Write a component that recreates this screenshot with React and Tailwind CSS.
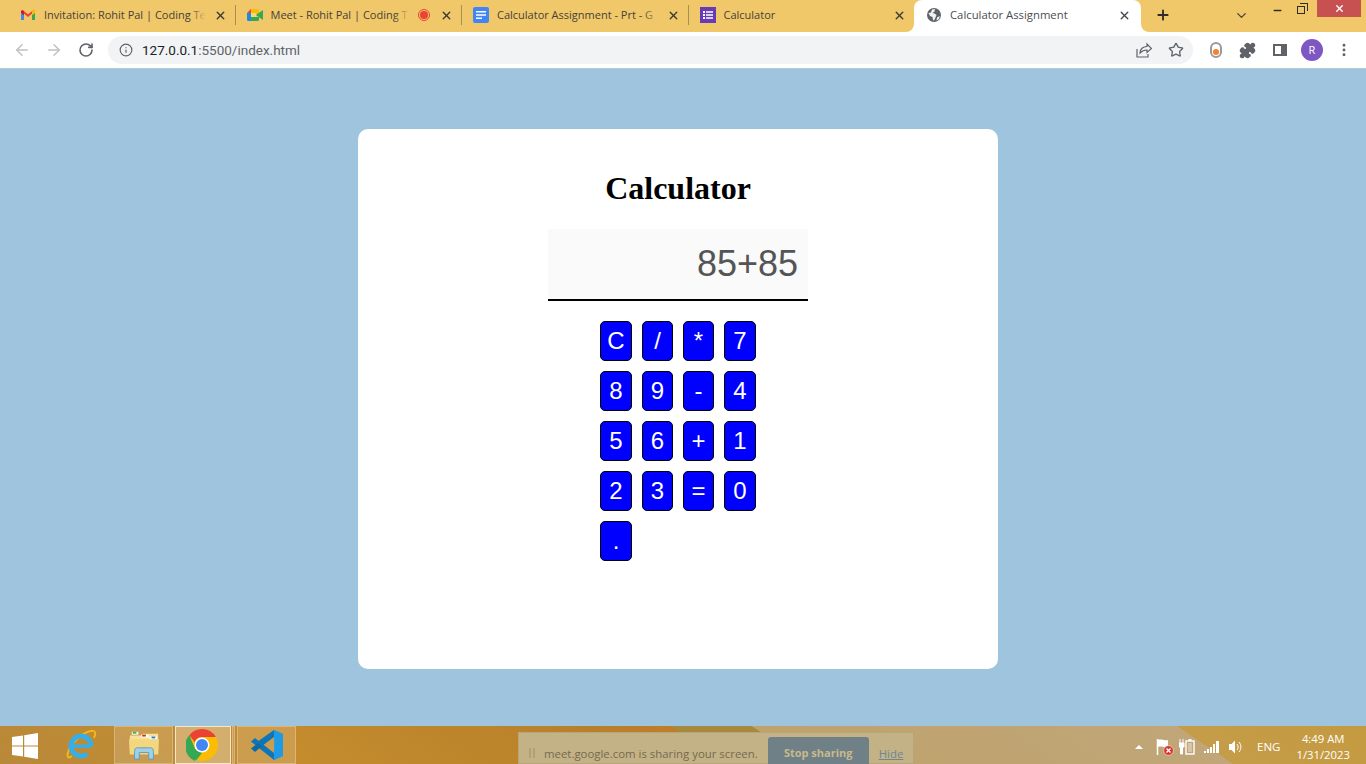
import { ArrowLeft, ArrowRight, RotateCw, Info, Star, Puzzle, MoreVertical, Plus, ChevronDown, X, Minus } from 'lucide-react'

const keys = ['C', '/', '*', '7', '8', '9', '-', '4', '5', '6', '+', '1', '2', '3', '=', '0', '.']

const GmailIcon = () => (
    <svg width="16" height="16" viewBox="0 0 16 16">
        <path d="M1 4v9h3V6z" fill="#4285f4" />
        <path d="M15 4v9h-3V6z" fill="#34a853" />
        <path d="M1 4.200 2.400 3 8 7.200 13.600 3 15 4.200 8 10z" fill="#ea4335" />
        <path d="M12 4.200 13.600 3 15 4.200V6l-3 2.200z" fill="#fbbc04" />
        <path d="M1 4.200 2.400 3 4 4.200v4L1 6z" fill="#c5221f" />
    </svg>
)

const MeetIcon = () => (
    <svg width="16" height="16" viewBox="0 0 16 16">
        <path d="M4 2h6.500A1.500 1.500 0 0 1 12 3.500V7H0z" fill="#fbbc04" />
        <path d="M0 6h4v8H1.500A1.500 1.500 0 0 1 0 12.500z" fill="#1e88e5" />
        <path d="M0 6l4-4v4z" fill="#ea4335" />
        <path d="M4 10h8v2.500a1.500 1.500 0 0 1-1.500 1.500H4z" fill="#34a853" />
        <path d="M9 8l7-5v10z" fill="#34a853" />
        <rect x="4" y="6" width="5" height="4" fill="#f6d978" />
    </svg>
)

const DocsIcon = () => (
    <svg width="16" height="16" viewBox="0 0 16 16">
        <rect width="16" height="16" rx="2" fill="#4285f4" />
        <path d="M3 4h10v1.600H3zM3 7.200h10v1.600H3zM3 10.400h6V12H3z" fill="#fff" />
    </svg>
)

const FormsIcon = () => (
    <svg width="16" height="16" viewBox="0 0 16 16">
        <rect width="16" height="16" fill="#673ab7" />
        <path d="M3 4h2v2H3zM6 4.200h7v1.600H6zM3 7h2v2H3zM6 7.200h7v1.600H6zM3 10h2v2H3zM6 10.200h7v1.600H6z" fill="#fff" />
    </svg>
)

const GlobeIcon = () => (
    <svg width="14" height="14" viewBox="0 0 14 14">
        <circle cx="7" cy="7" r="7" fill="#5f6368" />
        <path d="M1.500 5 4 4.500l1-3 3-.5-.5 2.500-2 1.500 2 .5 2 1.500-1 2.500-1.500 3-1-.5-.5-3L3 8z" fill="#f1f3f4" />
        <path d="M10 9.500 12.800 8l-.8 3-2.500 1.500z" fill="#f1f3f4" />
    </svg>
)

const ShareIcon = () => (
    <svg width="16" height="16" viewBox="0 0 16 16" fill="none" stroke="#5f6368" strokeWidth="1.200">
        <path d="M1 7v8h11v-3" />
        <path d="M4 11c0-4 3-6.500 7-6.500V2l4.500 4.500L11 10.500V8c-3 0-5 .8-7 3z" />
    </svg>
)

const Tab = ({ icon, title, record, last }) => (
    <div className="relative flex h-8 w-[226.500px] shrink-0 items-center pb-[2px] pl-[11px] pr-2">
        <span className="flex w-4 shrink-0">{icon}</span>
        <span className="relative ml-2 flex-1 overflow-hidden whitespace-nowrap text-[11px] text-[#45423a]">
            {title}
            <span className="absolute inset-y-0 right-0 w-4 bg-gradient-to-r from-transparent to-[#f0c869]" />
        </span>
        {record && (
            <span className="ml-2 mr-[2px] flex size-3 shrink-0 items-center justify-center rounded-full border border-[#ea4335]">
                <span className="size-2 rounded-full bg-[#ea4335]" />
            </span>
        )}
        <X size={13} strokeWidth={2.600} className="ml-2 mr-[1px] shrink-0 text-[#3c3a34]" />
        {!last && <span className="absolute right-0 top-[5px] h-5 w-px bg-[#a98f4f]" />}
    </div>
)

const WinLogo = () => (
    <svg width="26" height="26" viewBox="0 0 26 26">
        <path d="M0 4 11 2.400v10H0zM12.200 2.200 26 0v12.400H12.200zM0 13.600h11v10L0 22zM12.200 13.600H26V26l-13.800-2.200z" fill="#fff" />
    </svg>
)

const IeLogo = () => (
    <svg width="32" height="32" viewBox="0 0 32 32">
        <path d="M7 27C2 31 1 26 5 19 9 11 19 3 26 2c5-1 5 3 3 7" fill="none" stroke="#f3b61f" strokeWidth="2" />
        <circle cx="16" cy="17" r="10" fill="none" stroke="#38aee6" strokeWidth="5" strokeDasharray="54 9" strokeDashoffset="-9" />
        <path d="M7 15.500h19V19H7z" fill="#38aee6" />
    </svg>
)

const FolderLogo = () => (
    <svg width="32" height="32" viewBox="0 0 34 32">
        <path d="M2 6h12l2-2h16v21H2z" fill="#f6e09a" />
        <path d="M4 2h7v3H4z" fill="#fff" />
        <path d="M5 2h4v2H5z" fill="#3fb24b" />
        <path d="M14 5h8v3h-8z" fill="#fff" />
        <path d="M15 5h4v2h-4z" fill="#c8372d" />
        <path d="M23 7h8v3h-8z" fill="#fff" />
        <path d="M25 7h4v2h-4z" fill="#2c7fd3" />
        <path d="M1 10h32l-1 16H2z" fill="#f3d77f" />
        <path d="M7 31v-8c0-3 1-4 3-4h14c2 0 3 1 3 4v8h-5v-7H12v7z" fill="#9fd0e8" stroke="#5d9dbd" />
    </svg>
)

const ChromeLogo = () => (
    <svg width="32" height="32" viewBox="0 0 32 32">
        <circle cx="16" cy="16" r="16" fill="#fbbc04" />
        <path d="M16 0a16 16 0 0 1 13.860 8H16a8 8 0 0 0-7.400 5L3.300 6.200A16 16 0 0 1 16 0z" fill="#ea4335" />
        <path d="M3.300 6.200 9.200 20a8 8 0 0 0 3.300 3.300L9 31.900A16 16 0 0 1 3.300 6.200z" fill="#34a853" />
        <path d="M9.500 20.500 16 24l-5.500 7.100-3-2z" fill="#34a853" />
        <circle cx="16" cy="16" r="7.500" fill="#fff" />
        <circle cx="16" cy="16" r="6" fill="#4285f4" />
    </svg>
)

const VsCodeLogo = () => (
    <svg width="34" height="32" viewBox="0 0 34 32">
        <path d="M24 1 33 5v22l-9 4z" fill="#23a3ea" />
        <path d="M24 1v7L12 17 7 13z" fill="#0d76b8" />
        <path d="M24 31v-7L5 9 1 12.500z" fill="#0d76b8" />
        <path d="M24 1 33 5v22l-9 4 1-15z" fill="#1f9be3" />
        <path d="M1 19.500 5 23l7-6-4-3z" fill="#0a69a6" />
    </svg>
)

const FlagIcon = () => (
    <svg width="18" height="18" viewBox="0 0 18 18">
        <path d="M1.500 1v16" stroke="#fff" strokeWidth="1.500" />
        <path d="M2 2c3-1.500 5 1 10 0v7c-5 1-7-1.500-10 0z" fill="#fff" />
        <circle cx="12.500" cy="12.500" r="4.800" fill="#d9342b" stroke="#fff" strokeWidth=".5" />
        <path d="m10.500 10.500 4 4m0-4-4 4" stroke="#fff" strokeWidth="1.400" />
    </svg>
)

const BatteryIcon = () => (
    <svg width="16" height="18" viewBox="0 0 16 18">
        <path d="M1 1v4M4 1v4M0 5h5v4H3.500v7h-2V9H0z" stroke="#fff" strokeWidth="1" fill="#fff" />
        <rect x="7" y="3" width="8" height="13" fill="none" stroke="#fff" strokeWidth="1.400" />
        <rect x="9.500" y="1" width="3" height="2" fill="#fff" />
        <rect x="9" y="5" width="4" height="9" fill="#fff" opacity=".35" />
    </svg>
)

const SignalIcon = () => (
    <svg width="16" height="14" viewBox="0 0 16 14">
        <path d="M0 11h2v2H0zM3 9h2v4H3zM6 7h2v6H6zM9 4h2v9H9zM12 1h3v12h-3z" fill="#fff" />
    </svg>
)

const SpeakerIcon = () => (
    <svg width="16" height="16" viewBox="0 0 16 16">
        <path d="M1 5h2.500L7 1.500v13L3.500 11H1z" fill="#fff" />
        <path d="M9 5c1.500 2 1.500 4 0 6M11 3c2.500 3 2.500 7 0 10" stroke="#fff" fill="none" />
    </svg>
)

export default function App() {
    return (
        <div className="flex h-[764px] w-[1366px] flex-col overflow-hidden bg-[#9fc5de] font-['Open_Sans',sans-serif]">
            {/* browser tab strip */}
            <div className="flex h-8 shrink-0 bg-[linear-gradient(#f0c869_50%,#fff_50%)]">
                <div className="flex w-[914px] shrink-0 rounded-br-lg bg-[#f0c869] pl-[9px]">
                    <Tab icon={<GmailIcon />} title="Invitation: Rohit Pal | Coding Te" />
                    <Tab icon={<MeetIcon />} title="Meet - Rohit Pal | Coding T" record />
                    <Tab icon={<DocsIcon />} title="Calculator Assignment - Prt - G" />
                    <div className="w-[225px] overflow-hidden"><Tab icon={<FormsIcon />} title="Calculator" last /></div>
                </div>
                <div className="flex w-[227px] items-center rounded-t-lg bg-white pb-[2px] pl-[13px] pr-[10px]">
                    <GlobeIcon />
                    <span className="ml-[9px] flex-1 whitespace-nowrap text-[11.300px] text-[#4a4d52]">Calculator Assignment</span>
                    <X size={13} strokeWidth={2.600} className="text-[#45484d]" />
                </div>
                <div className="flex flex-1 items-center rounded-bl-lg bg-[#f0c869] pb-[2px]">
                    <Plus size={16} strokeWidth={2.800} className="ml-[14px] text-[#2f2d28]" />
                    <ChevronDown size={15} strokeWidth={2.200} className="ml-[63px] text-[#4a463b]" />
                    <Minus size={11} strokeWidth={3.500} className="mb-[10px] ml-[23px] text-[#2f2d28]" />
                    <div className="relative mb-[14px] ml-[14px] size-[11px]">
                        <span className="absolute bottom-0 left-0 size-[8px] border border-[#2f2d28]" />
                        <span className="absolute right-0 top-0 size-[8px] border-r border-t border-[#2f2d28]" />
                    </div>
                    <div className="ml-[9px] flex h-[17px] w-[44px] items-center justify-center self-start bg-[#c75050]">
                        <X size={11} strokeWidth={3} className="text-white" />
                    </div>
                </div>
            </div>

            {/* toolbar */}
            <div className="flex h-[37px] shrink-0 items-center border-b border-[#b7c6d2] bg-white pl-[13px]">
                <ArrowLeft size={18} strokeWidth={2} className="text-[#bfc1c4]" />
                <ArrowRight size={18} strokeWidth={2} className="ml-[14px] text-[#bfc1c4]" />
                <RotateCw size={16} strokeWidth={2.400} className="ml-[15px] text-[#5f6368]" />
                <div className="ml-[14px] flex h-7 w-[1085px] items-center rounded-full bg-[#f1f3f4] pl-[11px] pr-[9px]">
                    <Info size={14} strokeWidth={2} className="text-[#5f6368]" />
                    <span className="ml-[9px] flex-1 font-['Roboto',sans-serif] text-[13.500px] text-[#5f6368]">
                        <span className="text-[#202124]">127.0.0.1</span>:5500/index.html
                    </span>
                    <ShareIcon />
                    <Star size={16} strokeWidth={2} className="ml-[16px] text-[#5f6368]" />
                </div>
                <div className="ml-[17px] flex h-4 w-3 items-end justify-center rounded-full border-2 border-[#9a9a9a] pb-[1px]">
                    <span className="size-[6px] rounded-full bg-[#f5812a]" />
                </div>
                <Puzzle size={17} strokeWidth={2} fill="#5f6368" className="ml-[17px] text-[#5f6368]" />
                <div className="ml-[17px] flex h-3 w-[14px] justify-end border-2 border-[#5f6368]">
                    <span className="w-[4px] bg-[#5f6368]" />
                </div>
                <div className="ml-[14px] flex size-[22px] items-center justify-center rounded-full bg-[#7e57c2] text-[11px] text-white">R</div>
                <MoreVertical size={16} strokeWidth={2.400} className="ml-[13px] text-[#5f6368]" />
            </div>

            {/* page */}
            <div className="flex flex-1 justify-center pr-[10px] pt-[60px]">
                <div className="flex h-[540px] w-[640px] flex-col items-center rounded-[10px] bg-white pt-[39px]">
                    <h1 className="font-['Liberation_Serif',serif] text-[32px] font-bold leading-[40px] text-black">Calculator</h1>
                    <div className="mt-[21px] flex h-[72px] w-[260px] items-center justify-end border-b-2 border-black bg-[#fafafa] pr-[10px] font-['Liberation_Sans',sans-serif] text-[36px] text-[#555555]">
                        85+85
                    </div>
                    <div className="mt-[20px] grid grid-cols-[32px_31px_31px_32px] gap-x-[10px] gap-y-[10px]">
                        {keys.map(k => (
                            <button key={k} className="flex h-10 items-center justify-center rounded-[5px] border border-black bg-[#0000ff] font-['Liberation_Sans',sans-serif] text-[24px] text-white">
                                {k}
                            </button>
                        ))}
                    </div>
                </div>
            </div>

            {/* windows taskbar */}
            <div className="flex h-[38px] shrink-0 bg-[linear-gradient(34deg,#b9893a_0%,#c48c2d_22%,#b8802a_45%,#c07d28_51%,#a58a3e_51.200%,#a58a3e_56.800%,#bfa26c_56.800%,#c0a678_86.700%,#c59c48_86.700%,#c49a40_100%)] text-white">
                <div className="ml-[12px] mt-[7px]"><WinLogo /></div>
                <div className="ml-[27px] mt-[3px]"><IeLogo /></div>
                <div className="ml-[17px] flex w-[59px] items-center justify-center border border-white/25 bg-white/15"><FolderLogo /></div>
                <div className="ml-[2px] flex w-[56px] items-center justify-center border border-white/70 bg-white/30 pr-[3px]"><ChromeLogo /></div>
                <div className="ml-[1px] w-[3px] border border-white/25 bg-white/15" />
                <div className="ml-[2px] flex w-[59px] items-center justify-center border border-white/25 bg-white/15"><VsCodeLogo /></div>
                <div className="ml-[222px] mt-[6px] flex h-[32px] w-[396px] shrink-0 items-start border border-[#b7a67a] bg-[#c4b287] pl-[10px] text-[11.400px]">
                    <span className="mt-[15px] h-[10px] w-[6px] border-x-2 border-[#ada07a]" />
                    <span className="ml-[9px] mt-[12px] whitespace-nowrap text-[#756a4d]">meet.google.com is sharing your screen.</span>
                    <span className="ml-[10px] mt-[4px] flex h-[28px] w-[101px] shrink-0 items-center justify-center rounded-t-[3px] bg-[#6f8186] pt-[4px] text-[11px] font-bold text-[#c9b98c]">Stop sharing</span>
                    <span className="ml-[10px] mt-[12px] text-[#6f8793] underline">Hide</span>
                </div>
                <div className="ml-[221px] flex items-center pt-[4px]">
                    <span className="h-0 w-0 border-x-[4px] border-b-[4px] border-x-transparent border-b-white" />
                    <div className="ml-[13px] flex"><FlagIcon /></div>
                    <div className="ml-[5px] flex"><BatteryIcon /></div>
                    <div className="ml-[9px] flex"><SignalIcon /></div>
                    <div className="ml-[8px] flex"><SpeakerIcon /></div>
                    <span className="ml-[13px] text-[11.500px]">ENG</span>
                    <div className="ml-[16px] flex flex-col items-center text-[11.300px] leading-[16px]">
                        <span>4:49 AM</span>
                        <span>1/31/2023</span>
                    </div>
                </div>
            </div>
        </div>
    )
}
